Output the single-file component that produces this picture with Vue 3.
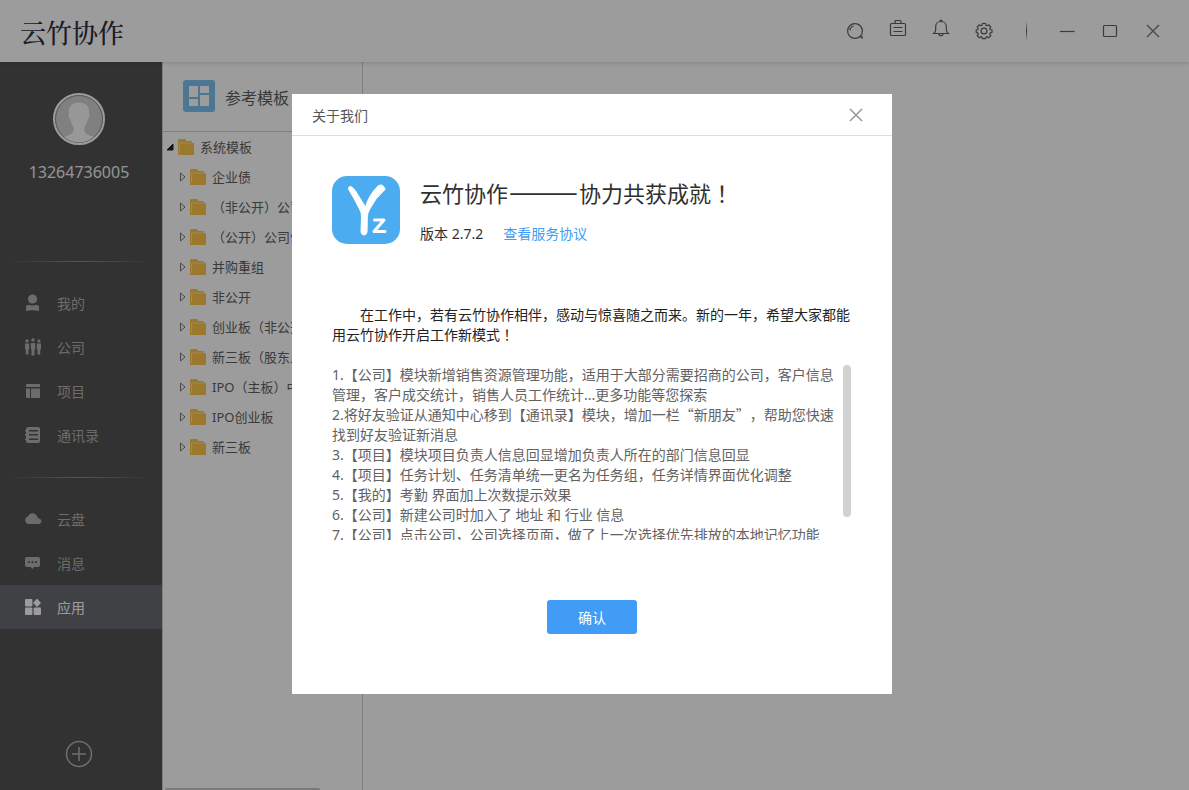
<script setup>
import { ref } from 'vue'

const mainNav = [
  { icon: 'user', label: '我的' },
  { icon: 'company', label: '公司' },
  { icon: 'project', label: '项目' },
  { icon: 'contacts', label: '通讯录' }
]
const toolNav = [
  { icon: 'cloud', label: '云盘' },
  { icon: 'message', label: '消息' },
  { icon: 'apps', label: '应用' }
]
const navGroups = [mainNav, toolNav]
const active = ref('apps')

const folders = [
  '企业债',
  '（非公开）公司',
  '（公开）公司债',
  '并购重组',
  '非公开',
  '创业板（非公开',
  '新三板（股东人',
  'IPO（主板）中',
  'IPO创业板',
  '新三板'
]

const notesBefore = ['1.【公司】模块新增销售资源管理功能，适用于大部分需要招商的公司，客户信息管理，客户成交统计，销售人员工作统计...更多功能等您探索']
const notesAfter = [
  '3.【项目】模块项目负责人信息回显增加负责人所在的部门信息回显',
  '4.【项目】任务计划、任务清单统一更名为任务组，任务详情界面优化调整',
  '5.【我的】考勤 界面加上次数提示效果',
  '6.【公司】新建公司时加入了 地址 和 行业 信息',
  '7.【公司】点击公司，公司选择页面，做了上一次选择优先排放的本地记忆功能'
]
</script>

<template>
  <div class="app">
    <header class="topbar">
      <div class="brand">云竹协作</div>
      <div class="tools">
        <button class="tool" aria-label="搜索">
          <svg width="18" height="18" viewBox="0 0 18 18"><circle cx="9" cy="9" r="7.4" /><path d="M4 8.4A4.8 4.8 0 0 1 7.6 4M14 14.4l2.6 2M16 13.6v3" /></svg>
        </button>
        <button class="tool raised" aria-label="工作">
          <svg width="18" height="18" viewBox="0 0 18 18"><rect x="1.5" y="4.5" width="15" height="12" rx="1" /><path d="M6 4.500v-2q0-1 1-1h4q1 0 1 1v2M4.500 8.500h9M4.500 12.500h9" /></svg>
        </button>
        <button class="tool raised" aria-label="通知">
          <svg width="18" height="18" viewBox="0 0 18 18"><path d="M1.700 14.500h14.600q-2-1.700-2-4V7.500c0-3-2.300-5-5.300-5s-5.300 2-5.300 5v3q0 2.300-2 4zM8 2.500q0-1.300 1-1.300t1 1.300M7 15q0 1.700 2 1.700t2-1.700" /></svg>
        </button>
        <button class="tool" aria-label="设置">
          <svg width="18" height="18" viewBox="0 0 18 18"><circle cx="9" cy="9" r="2.900" /><path d="M7.400 1.500h3.200l.4 1.900 1 .5 1.700-1.100 2.100 2.100-1.100 1.700.5 1 1.800.4v2.400l-1.800.6-.5 1 1.100 1.700-2.100 2.100-1.700-1.100-1 .5-.4 1.500H7.400L7 15.200l-1-.5-1.700 1.100-2.100-2.100L3.300 12l-.5-1-1.600-.6V8l1.600-.4.5-1-1.100-1.700 2.100-2.100L6 3.900l1-.5z" /></svg>
        </button>
        <span class="split"></span>
        <button class="tool win" aria-label="最小化">
          <svg width="18" height="18" viewBox="0 0 18 18"><path d="M2 9.500h14.500" /></svg>
        </button>
        <button class="tool win" aria-label="最大化">
          <svg width="18" height="18" viewBox="0 0 18 18"><rect x="2.500" y="3.500" width="13" height="11" rx="1" /></svg>
        </button>
        <button class="tool win light" aria-label="关闭">
          <svg width="18" height="18" viewBox="0 0 18 18"><path d="M3 3l12 12M15 3L3 15" /></svg>
        </button>
      </div>
    </header>

    <div class="body">
      <aside class="sidebar">
        <div class="profile">
          <svg class="avatar" width="52" height="52" viewBox="0 0 52 52">
            <defs><clipPath id="face"><circle cx="26" cy="26" r="23.500" /></clipPath></defs>
            <circle cx="26" cy="26" r="25" fill="#d4d4d4" stroke="#ffffff" stroke-width="2" />
            <circle cx="26" cy="26" r="23.500" fill="#d2d2d2" stroke="#909090" />
            <g clip-path="url(#face)" fill="#f8f8f8">
              <path d="M26 9.500c-7 0-10.500 4-10 10.500-1 2 0 5 1.300 6 .7 4 1.700 6 3.200 8v4.500q-1 3-10 5.500v8h31v-8q-9-2.500-10-5.500V34c1.500-2 2.500-4 3.200-8 1.300-1 2.300-4 1.300-6 .5-6.500-3-10.500-10-10.500z" />
            </g>
          </svg>
          <div class="phone">13264736005</div>
        </div>

        <nav class="nav" v-for="(group, g) in navGroups" :key="g">
          <button
            v-for="item in group"
            :key="item.icon"
            class="nav-item"
            :class="{ active: active === item.icon }"
            @click="active = item.icon"
          >
            <svg width="18" height="18" viewBox="0 0 18 18">
              <g v-if="item.icon === 'user'"><circle cx="8.500" cy="5" r="4.600" /><path d="M2 17v-4q0-2 2-2h1.500q3 1 6 0H13q2 0 2 2v4q-6.500-1.500-13 0z" /></g>
              <g v-else-if="item.icon === 'company'"><circle cx="3" cy="3" r="1.700" /><circle cx="9" cy="2" r="1.800" /><circle cx="15" cy="3" r="1.700" /><path d="M1 5.500h4.200v5.500l-.7 1v4.500h-2.700V12L1 11zM6.800 5h4.400v6l-.7 1v5.500h-3V12l-.7-1zM12.800 5.500H17V11l-.8 1v4.500h-2.700V12l-.7-1z" /></g>
              <g v-else-if="item.icon === 'project'"><path d="M2 5V3q0-1 1-1h12q1 0 1 1v2zM2 6.500h4V16H3q-1 0-1-1zM7 6.500h9V15q0 1-1 1H7z" /></g>
              <g v-else-if="item.icon === 'contacts'"><path fill-rule="evenodd" d="M4 1h10q2 0 2 2v12q0 2-2 2H4q-2 0-2-2v-1H1v-1.500h1v-3H1V8h1V5.500H1V4h1V3q0-2 2-2zM5 4v1.500h9V4zM5 8v1.500h9V8zM5 12.500V14h9v-1.500z" /></g>
              <g v-else-if="item.icon === 'cloud'"><path d="M5 14a4 4 0 0 1-1-7.800A5 5 0 0 1 13 6q.8 1 .8 2.200-1.800-.2-3 1.300 3.500-2.500 5.700-.3c1.800 2 .6 4.800-2 4.800z" /></g>
              <g v-else-if="item.icon === 'message'"><path fill-rule="evenodd" d="M3 3h11q2 0 2 2v6q0 2-2 2h-4l-2 2.300L7 13H3q-2 0-2-2V5q0-2 2-2zM4 7.200v1.800h1.800V7.200zM7.600 7.200v1.800h1.800V7.200zM11.200 7.200v1.800H13V7.200z" /></g>
              <g v-else><rect x="1" y="1" width="7.400" height="7.400" rx="1" /><path d="M13 .5L17 5l-4 4-4-4z" /><rect x="1" y="9.600" width="7.400" height="7.400" rx="1" /><rect x="9.600" y="9.600" width="7.400" height="7.400" rx="1" /></g>
            </svg>
            <span>{{ item.label }}</span>
          </button>
        </nav>

        <button class="add" aria-label="添加">
          <svg width="28" height="28" viewBox="0 0 28 28"><circle cx="14" cy="14" r="12.500" /><path d="M7 14h14M14 7v14" /></svg>
        </button>
      </aside>

      <section class="panel">
        <div class="panel-head">
          <svg width="32" height="32" viewBox="0 0 32 32">
            <rect width="32" height="32" rx="3" fill="#7bc1f2" />
            <path fill="#fff" d="M6 6h9v11H6zM17 6h9v7h-9zM6 19h9v7H6zM17 15h9v11h-9z" />
          </svg>
          <h2>参考模板</h2>
        </div>
        <div class="tree">
          <button class="row root">
            <svg class="arrow" width="8" height="8" viewBox="0 0 8 8"><path d="M7 1v6H1z" fill="#222" stroke="#222" /></svg>
            <svg class="folder" width="16" height="16" viewBox="0 0 16 16"><path d="M0 1q0-1 1-1h6l1.500 2H13q1 0 1 1v1h2v12H0z" fill="#ffc548" /><path d="M1.500 14V4H14" fill="none" stroke="#ffe199" /></svg>
            <span>系统模板</span>
          </button>
          <button v-for="name in folders" :key="name" class="row">
            <svg class="arrow" width="8" height="10" viewBox="0 0 8 10"><path d="M2.500 1L7 5 2.500 9z" fill="none" stroke="#777" /></svg>
            <svg class="folder" width="16" height="16" viewBox="0 0 16 16"><path d="M0 1q0-1 1-1h6l1.500 2H13q1 0 1 1v1h2v12H0z" fill="#ffc548" /><path d="M1.500 14V4H14" fill="none" stroke="#ffe199" /></svg>
            <span>{{ name }}</span>
          </button>
        </div>
        <div class="hscroll"></div>
      </section>
      <main class="content"></main>
    </div>

    <div class="mask">
      <div class="dialog" role="dialog" aria-labelledby="dialog-title">
        <div class="dialog-head">
          <h1 id="dialog-title">关于我们</h1>
          <button class="close" aria-label="关闭">
            <svg width="14" height="14" viewBox="0 0 14 14"><path d="M1 1l12 12M13 1L1 13" /></svg>
          </button>
        </div>
        <div class="dialog-body">
          <div class="about">
            <svg width="68" height="68" viewBox="0 0 68 68">
              <rect width="68" height="68" rx="15" fill="#4badf0" />
              <path d="M46.500 9.500q5-2 6.500 4-9.500 8-15.500 20-2 3-2.200 8l-.3 14.500q-.5 3-3 3-2.500 0-3-3l.5-15q0-5-2-8Q22 22 17 14q-1.500-3.500 1.500-3.500 3 .5 7.500 8.500L33.500 31q3.500-12.500 13-21.500z" fill="#fff" stroke="#fff" stroke-linejoin="round" />
              <path d="M42.500 44h9.500L42 55.500h11" fill="none" stroke="#fff" stroke-width="3" stroke-linecap="round" stroke-linejoin="round" />
            </svg>
            <div class="about-text">
              <h3>云竹协作<span class="dash">———</span>协力共获成就<span class="mark">！</span></h3>
              <p>版本 2.7.2<a href="#">查看服务协议</a></p>
            </div>
          </div>
          <p class="intro">在工作中，若有云竹协作相伴，感动与惊喜随之而来。新的一年，希望大家都能用云竹协作开启工作新模式<span class="mark">！</span></p>
          <div class="notes">
            <div class="notes-text">
              <p v-for="n in notesBefore" :key="n">{{ n }}</p>
              <p>2.将好友验证从通知中心移到【通讯录】模块，增加一栏<span class="full">“</span>新朋友<span class="full">”</span>，帮助您快速找到好友验证新消息</p>
              <p v-for="n in notesAfter" :key="n">{{ n }}</p>
            </div>
            <div class="thumb"></div>
          </div>
          <button class="confirm">确认</button>
        </div>
      </div>
    </div>
  </div>
</template>

<style>
html,
body,
#app {
  height: 100%;
}
body {
  margin: 0;
  overflow: hidden;
}
</style>

<style scoped>
.app {
  height: 100%;
  display: flex;
  flex-direction: column;
  background: #fff;
  font-family: "Noto Sans", "Noto Sans CJK SC", sans-serif;
  font-size: 14px;
  text-spacing-trim: space-all;
}
.app * {
  box-sizing: border-box;
}
button {
  margin: 0;
  padding: 0;
  border: 0;
  background: none;
  font: inherit;
  color: inherit;
  cursor: pointer;
}
h1,
h2,
h3,
p {
  margin: 0;
  font-weight: 400;
}
svg {
  display: block;
  flex: none;
}

.topbar {
  flex: none;
  height: 62px;
  display: flex;
  align-items: center;
  justify-content: space-between;
  padding: 0 27px 0 20px;
  box-shadow: 0 1px 4px rgba(0, 0, 0, 0.16);
  z-index: 1;
}
.brand {
  font-family: "Noto Serif CJK SC", "Source Han Serif SC", "AR PL UMing CN", "Noto Sans CJK SC", serif;
  font-size: 26px;
  font-weight: 500;
  color: #2b3040;
}
.tools {
  display: flex;
  align-items: center;
  gap: 25px;
}
.tool svg {
  fill: none;
  stroke: #606060;
  stroke-width: 1.2;
}
.raised {
  margin-bottom: 6px;
}
.light svg {
  stroke: #808080;
  stroke-width: 1.5;
}
.split {
  width: 1px;
  height: 20px;
  margin: 0 6px 0 8px;
  background: linear-gradient(transparent, #555, transparent);
}

.body {
  flex: 1;
  min-height: 0;
  display: flex;
}
.sidebar {
  flex: none;
  width: 162px;
  display: flex;
  flex-direction: column;
  background: #525252;
  color: #b1b1b1;
}
.profile {
  height: 199px;
  padding: 31px 4px 0 0;
  display: flex;
  flex-direction: column;
  align-items: center;
}
.phone {
  margin-top: 15px;
  font-size: 16px;
  line-height: 24px;
  color: #f0f0f0;
}
.nav {
  padding: 20px 0;
  background: linear-gradient(90deg, transparent 4%, #8c8c8c 50%, transparent 94%) top / 100% 1px no-repeat;
}
.nav-item {
  width: 100%;
  height: 44px;
  padding-left: 24px;
  display: flex;
  align-items: center;
  gap: 15px;
  line-height: 20px;
}
.nav-item svg {
  fill: currentColor;
}
.nav-item span {
  padding-top: 2px;
}
.nav-item.active {
  background: #696b71;
  color: #fff;
}
.add {
  margin: auto auto 22px 65px;
}
.add svg {
  fill: none;
  stroke: #b4b4b4;
  stroke-width: 1.5;
}

.panel {
  flex: none;
  width: 201px;
  display: flex;
  flex-direction: column;
  border-left: 1px solid #d0d0d0;
  border-right: 1px solid #d0d0d0;
  overflow: hidden;
  color: #606060;
}
.panel-head {
  flex: none;
  height: 70px;
  padding: 0 20px 1px;
  display: flex;
  align-items: center;
  gap: 10px;
  border-bottom: 1px solid #d0d0d0;
}
.panel-head h2 {
  padding-top: 3px;
  font-size: 16px;
  line-height: 24px;
  white-space: nowrap;
}
.tree {
  flex: 1;
}
.row {
  width: 100%;
  height: 30px;
  padding-left: 15px;
  display: flex;
  align-items: center;
  font-size: 13px;
  line-height: 20px;
  white-space: nowrap;
}
.root {
  padding-left: 3px;
}
.arrow {
  width: 8px;
}
.folder {
  margin: 0 6px 0 4px;
}
.hscroll {
  flex: none;
  width: 155px;
  height: 2px;
  margin-left: 2px;
  border-radius: 2px 2px 0 0;
  background: #c8c8c8;
}
.content {
  flex: 1;
}

.mask {
  position: fixed;
  inset: 0;
  z-index: 2;
  padding: 0 5px 2px 0;
  display: flex;
  align-items: center;
  justify-content: center;
  background: rgba(0, 0, 0, 0.39);
}
.dialog {
  width: 600px;
  background: #fff;
}
.dialog-head {
  height: 42px;
  padding: 0 29px 0 20px;
  display: flex;
  align-items: center;
  justify-content: space-between;
  border-bottom: 1px solid #ddd;
  color: #555;
}
.dialog-head h1 {
  padding-top: 3px;
  font-size: 14px;
  line-height: 20px;
}
.close svg {
  fill: none;
  stroke: #999;
  stroke-width: 1.5;
}
.dialog-body {
  padding: 40px 40px 60px;
}
.about {
  display: flex;
  gap: 20px;
  color: #303030;
}
.about-text h3 {
  font-size: 22px;
  line-height: 30px;
  white-space: nowrap;
}
.dash {
  margin: 0 1px;
  font-family: "Noto Sans CJK SC", sans-serif;
  font-size: 28px;
  line-height: 1;
}
.mark {
  font-family: "Noto Sans CJK TC", "Noto Sans CJK SC", sans-serif;
  line-height: 1;
}
.about-text p {
  margin-top: 16px;
  line-height: 20px;
}
.about-text a {
  margin-left: 20px;
  color: #409cf4;
  text-decoration: none;
}
.intro {
  margin-top: 61px;
  line-height: 20px;
  text-indent: 28px;
  color: #222;
}
.notes {
  height: 175px;
  margin-top: 20px;
  display: flex;
  justify-content: space-between;
  gap: 6px;
  overflow: hidden;
  line-height: 20px;
  color: #626262;
}
.notes-text {
  flex: 1;
}
.full {
  font-family: "Noto Sans CJK SC", sans-serif;
  line-height: 1;
}
.thumb {
  flex: none;
  width: 8px;
  height: 152px;
  margin-right: 1px;
  border-radius: 4px;
  background: #d2d2d2;
}
.confirm {
  display: block;
  width: 90px;
  height: 34px;
  margin: 60px auto 0;
  border-radius: 3px;
  background: #409cf4;
  color: #fff;
}
</style>
